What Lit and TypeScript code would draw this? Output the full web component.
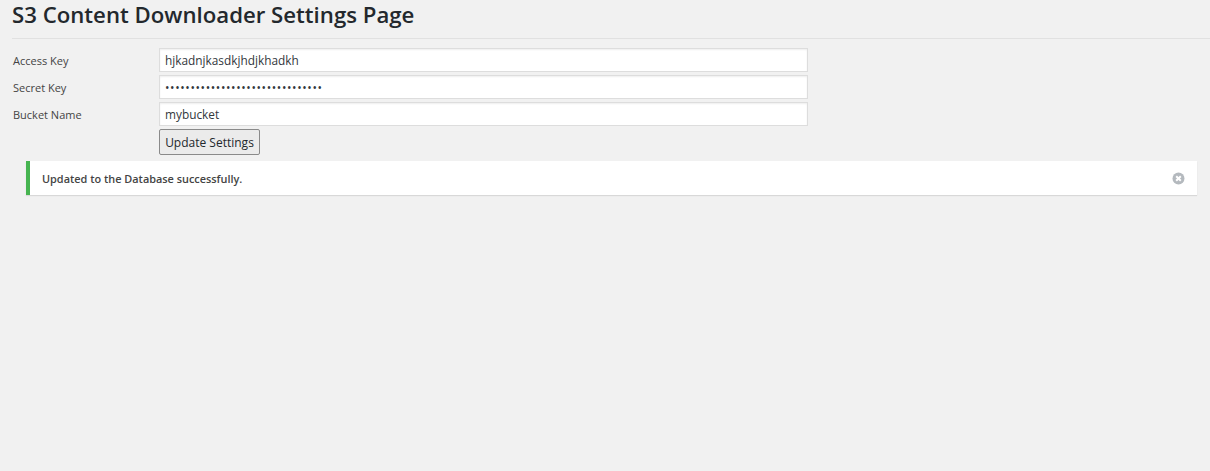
import { LitElement, html, css } from "lit";
import { customElement } from "lit/decorators.js";

@customElement("app-root")
export class AppRoot extends LitElement {
  static styles = css`
    :host {
      display: block;
      min-height: 471px;
      background: #f1f1f1;
      color: #444;
      font-family: "Open Sans", "Noto Sans", sans-serif;
      font-size: 12px;
      overflow: hidden;
    }
    .wrap {
      padding-left: 12px;
      display: flex;
      flex-direction: column;
    }
    h1 {
      margin: 0;
      height: 38px;
      box-sizing: content-box;
      border-bottom: 1px solid #e1e1e1;
      font-size: 22.2px;
      line-height: 30px;
      font-weight: 600;
      color: #23282d;
    }
    form {
      margin: 9px 0 0;
      display: grid;
      grid-template-columns: 147px 649px;
      grid-template-rows: 24px 24px 24px 26px;
      row-gap: 3px;
      align-items: center;
    }
    label {
      padding-left: 1px;
      color: #444;
      font-size: 11px;
    }
    .field {
      box-sizing: border-box;
      width: 649px;
      height: 24px;
      padding: 0 5px;
      border: 1px solid #ddd;
      background: #fff;
      box-shadow: inset 0 1px 2px rgba(0, 0, 0, 0.07);
      font-family: inherit;
      font-size: 11.85px;
      color: #32373c;
      outline: none;
      margin: 0;
    }
    .pw {
      letter-spacing: 0.63px;
    }
    .actions {
      grid-column: 2;
      height: 26px;
      display: flex;
    }
    button {
      box-sizing: border-box;
      width: 101px;
      height: 26px;
      padding: 0;
      border: 1px solid #8a8a8a;
      border-radius: 2px;
      background: #ebebeb;
      font-family: inherit;
      font-size: 12px;
      color: #23282d;
    }
    .notice {
      margin: 6px 13px 0 14px;
      height: 34px;
      box-sizing: border-box;
      display: flex;
      align-items: center;
      justify-content: space-between;
      padding: 0 12px 0 12px;
      background: #fff;
      border-left: 4px solid #46b450;
      box-shadow: 0 1px 1px rgba(0, 0, 0, 0.1);
      font-size: 10.9px;
      font-weight: 600;
      color: #444;
    }
    .notice svg {
      width: 13px;
      height: 13px;
      display: block;
    }
  `;

  render() {
    return html`
      <div class="wrap">
        <h1>S3 Content Downloader Settings Page</h1>
        <form>
          <label>Access Key</label>
          <input class="field" type="text" value="hjkadnjkasdkjhdjkhadkh" />
          <label>Secret Key</label>
          <input class="field pw" type="password" value="•••••••••••••••••••••••••••••••" />
          <label>Bucket Name</label>
          <input class="field" type="text" value="mybucket" />
          <div class="actions"><button type="button">Update Settings</button></div>
        </form>
        <div class="notice">
          <span>Updated to the Database successfully.</span>
          <svg viewBox="0 0 13 13" aria-hidden="true">
            <circle cx="6.5" cy="6.5" r="6" fill="#b4b9be"></circle>
            <path d="M4.2 4.2l4.6 4.6M8.8 4.2l-4.6 4.6" stroke="#fff" stroke-width="2" fill="none"></path>
          </svg>
        </div>
      </div>
    `;
  }
}
